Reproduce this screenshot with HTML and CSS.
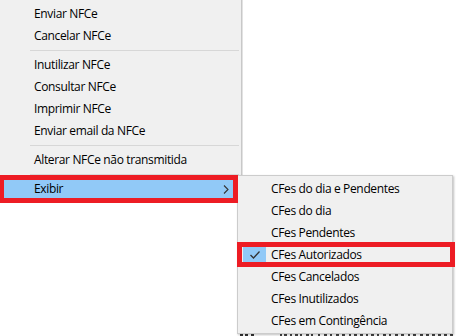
FILE: index.html
```html
<!DOCTYPE html>
<html lang="pt">
<head>
<meta charset="utf-8">
<link rel="stylesheet" href="styles.css">
</head>
<body>
<div class="screen">
  <div class="behind"></div>

  <div class="menu main">
    <div class="item">Enviar NFCe</div>
    <div class="item">Cancelar NFCe</div>
    <div class="sep"></div>
    <div class="item">Inutilizar NFCe</div>
    <div class="item">Consultar NFCe</div>
    <div class="item">Imprimir NFCe</div>
    <div class="item">Enviar email da NFCe</div>
    <div class="sep"></div>
    <div class="item">Alterar NFCe não transmitida</div>
    <div class="sep"></div>
    <div class="item active">
      <span class="label">Exibir</span>
      <svg class="chev" width="6" height="9" viewBox="0 0 6 9"><path d="M1 0.5 L5 4.5 L1 8.5" fill="none" stroke="#333" stroke-width="1.1"/></svg>
    </div>
  </div>

  <div class="menu sub">
    <div class="item">CFes do dia e Pendentes</div>
    <div class="item">CFes do dia</div>
    <div class="item">CFes Pendentes</div>
    <div class="item checked">
      <span class="checkbox"><svg width="12" height="10" viewBox="0 0 12 10"><path d="M1.5 5 L4.5 8 L10.5 1.5" fill="none" stroke="#333" stroke-width="1.3"/></svg></span>
      CFes Autorizados
    </div>
    <div class="item">CFes Cancelados</div>
    <div class="item">CFes Inutilizados</div>
    <div class="item">CFes em Contingência</div>
  </div>

  <div class="mark mark-exibir"></div>
  <div class="mark mark-autorizados"></div>
</div>
</body>
</html>
```

FILE: styles.css
```css
html, body {
  margin: 0;
  padding: 0;
  background: #ffffff;
}

.screen {
  position: relative;
  width: 456px;
  height: 336px;
  overflow: hidden;
  background: #ffffff;
  font-family: "Open Sans", "Noto Sans", "DejaVu Sans", sans-serif;
  font-size: 12px;
  letter-spacing: -0.35px;
  color: #000;
}

/* tops of the letters of the window behind the menus */
.behind {
  position: absolute;
  left: 240px;
  top: 334px;
  width: 216px;
  height: 2px;
  background:
    linear-gradient(90deg,
      #333 0 3px, transparent 3px 5px, #333 5px 8px, transparent 8px 11px,
      #333 11px 14px, transparent 14px 40px,
      #444 40px 42px, transparent 42px 44px, #444 44px 47px, transparent 47px 50px,
      #444 50px 52px, transparent 52px 55px, #444 55px 58px, transparent 58px 60px,
      #444 60px 62px, transparent 62px 66px, #444 66px 69px, transparent 69px 71px,
      #444 71px 73px, transparent 73px 78px, #444 78px 80px, transparent 80px 84px,
      #444 84px 87px, transparent 87px 90px, #444 90px 92px, transparent 92px 96px,
      #444 96px 99px, transparent 99px 102px, #444 102px 105px, transparent 105px 109px,
      #444 109px 111px, transparent 111px 114px, #444 114px 117px, transparent 117px 120px,
      #444 120px 123px, transparent 123px 126px, #444 126px 128px, transparent 128px 131px,
      #444 131px 134px, transparent 134px 137px, #444 137px 139px, transparent 139px 143px,
      #444 143px 146px, transparent 146px 149px, #444 149px 151px, transparent 151px 155px,
      #444 155px 158px, transparent 158px 161px, #444 161px 164px, transparent 164px 168px,
      #444 168px 170px, transparent 170px 173px, #444 173px 176px, transparent 176px 180px,
      #444 180px 183px, transparent 183px 186px, #444 186px 189px, transparent 189px 192px,
      #444 192px 195px, transparent 195px 198px, #444 198px 201px, transparent 201px 204px,
      #444 204px 207px, transparent 207px 210px, #444 210px 213px, transparent 213px 216px);
}

.menu {
  background: #f0f0f0;
  box-sizing: border-box;
}

.main {
  width: 242px;
  padding: 3px 2px 3px 0;
  border-right: 1px solid #c8c8c8;
  box-shadow: 1px 0 0 #e2e2e2;
}

.item {
  height: 22px;
  line-height: 22px;
  padding-left: 34px;
  white-space: nowrap;
  display: flex;
  align-items: center;
}

.sep {
  height: 1px;
  margin: 3px 0 3px 30px;
  background: #d7d7d7;
}

.item.active {
  background: #91c9f7;
  justify-content: space-between;
  padding-right: 10px;
}

.chev {
  display: block;
}

.sub {
  position: absolute;
  left: 237px;
  top: 175px;
  width: 216px;
  height: 159px;
  padding: 2px 2px 0 2px;
  border: 1px solid #cccccc;
  box-shadow: 1px 1px 2px rgba(0, 0, 0, 0.25);
  z-index: 2;
}

.sub .item {
  padding-left: 31px;
  position: relative;
}

.checkbox {
  position: absolute;
  left: 3px;
  top: 1px;
  width: 23px;
  height: 20px;
  background: #91c9f7;
  display: flex;
  align-items: center;
  justify-content: center;
}

.mark {
  position: absolute;
  border: 5px solid #ed1c24;
  box-sizing: border-box;
  z-index: 3;
}

.mark-exibir {
  left: -1px;
  top: 175px;
  width: 239px;
  height: 28px;
}

.mark-autorizados {
  left: 237px;
  top: 242px;
  width: 218px;
  height: 25px;
}
```
